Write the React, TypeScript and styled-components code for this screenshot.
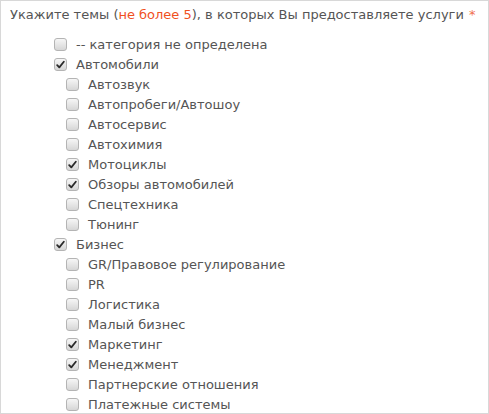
import React from "react";
import styled, { createGlobalStyle } from "styled-components";

const Global = createGlobalStyle`
  html, body { margin: 0; padding: 0; background: #fff; }
  body { font-family: "DejaVu Sans", Verdana, sans-serif; }
`;

const Panel = styled.div`
  box-sizing: border-box;
  width: 489px;
  height: 414px;
  border: 1px solid #d8d8d8;
  overflow: hidden;
  padding: 6px 0 0 9px;
  color: #555;
  font-size: 13px;
`;

const Title = styled.div`
  line-height: 16px;
  height: 16px;
`;

const Red = styled.span`
  color: #f0501e;
`;

const Star = styled.span`
  color: #f07050;
  margin-left: 5px;
`;

const List = styled.ul`
  list-style: none;
  margin: 11px 0 0 0;
  padding: 0 0 0 44px;
`;

const Row = styled.li<{ $level: number }>`
  display: flex;
  align-items: center;
  height: 20px;
  padding-left: ${(p) => (p.$level === 2 ? 12 : 0)}px;
`;

const Box = styled.span<{ $checked: boolean }>`
  box-sizing: border-box;
  width: 13px;
  height: 13px;
  border: 1px solid #b4b4b4;
  border-radius: 3px;
  background: linear-gradient(#f6f6f6, #d6d6d6);
  display: flex;
  align-items: center;
  justify-content: center;
  margin-right: 9px;
  flex: none;
`;

const Label = styled.span`
  white-space: nowrap;
`;

type Item = { label: string; level: number; checked?: boolean };

const items: Item[] = [
  { label: "-- категория не определена", level: 1 },
  { label: "Автомобили", level: 1, checked: true },
  { label: "Автозвук", level: 2 },
  { label: "Автопробеги/Автошоу", level: 2 },
  { label: "Автосервис", level: 2 },
  { label: "Автохимия", level: 2 },
  { label: "Мотоциклы", level: 2, checked: true },
  { label: "Обзоры автомобилей", level: 2, checked: true },
  { label: "Спецтехника", level: 2 },
  { label: "Тюнинг", level: 2 },
  { label: "Бизнес", level: 1, checked: true },
  { label: "GR/Правовое регулирование", level: 2 },
  { label: "PR", level: 2 },
  { label: "Логистика", level: 2 },
  { label: "Малый бизнес", level: 2 },
  { label: "Маркетинг", level: 2, checked: true },
  { label: "Менеджмент", level: 2, checked: true },
  { label: "Партнерские отношения", level: 2 },
  { label: "Платежные системы", level: 2 },
];

const Check = () => (
  <svg width="9" height="9" viewBox="0 0 9 9">
    <path d="M1.2 5.2 L3.3 7.4 L7.8 1.8" fill="none" stroke="#2a2a2a" strokeWidth="1.8" strokeLinecap="round" strokeLinejoin="round" />
  </svg>
);

export default function App() {
  return (
    <>
      <Global />
      <Panel>
        <Title>
          Укажите темы (<Red>не более 5</Red>), в которых Вы предоставляете услуги<Star>*</Star>
        </Title>
        <List>
          {items.map((it) => (
            <Row key={it.label} $level={it.level}>
              <Box $checked={!!it.checked}>{it.checked && <Check />}</Box>
              <Label>{it.label}</Label>
            </Row>
          ))}
        </List>
      </Panel>
    </>
  );
}
